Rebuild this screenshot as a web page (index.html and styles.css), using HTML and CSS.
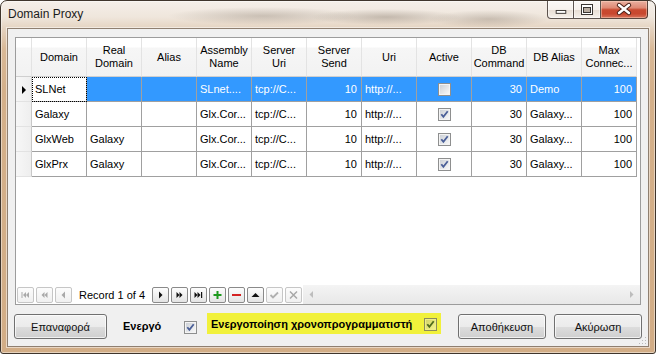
FILE: index.html
```html
<!DOCTYPE html>
<html>
<head>
<meta charset="utf-8">
<title>Domain Proxy</title>
<link rel="stylesheet" href="styles.css">
</head>
<body>
<svg class="defs" width="0" height="0" aria-hidden="true">
  <defs>
    <linearGradient id="cbg" x1="0" y1="0" x2="1" y2="1">
      <stop offset="0" stop-color="#cdd1d7"/>
      <stop offset="1" stop-color="#f7f7f7"/>
    </linearGradient>
    <linearGradient id="cbgy" x1="0" y1="0" x2="1" y2="1">
      <stop offset="0" stop-color="#d3d46a"/>
      <stop offset="1" stop-color="#f3f38a"/>
    </linearGradient>
    <symbol id="cbon" viewBox="0 0 13 13">
      <rect x=".5" y=".5" width="12" height="12" fill="#f4f4f4" stroke="#8e8f8f"/>
      <rect x="2" y="2" width="9" height="9" fill="url(#cbg)"/>
      <path d="M3.3 6.2 L5.4 8.9 L9.7 3.3" stroke="#4a5f98" stroke-width="1.8" fill="none"/>
    </symbol>
    <symbol id="cboff" viewBox="0 0 13 13">
      <rect x=".5" y=".5" width="12" height="12" fill="#f4f4f4" stroke="#8e8f8f"/>
      <rect x="2" y="2" width="9" height="9" fill="url(#cbg)"/>
    </symbol>
    <symbol id="cbyel" viewBox="0 0 13 13">
      <rect x=".5" y=".5" width="12" height="12" fill="#eeee88" stroke="#8c8c5c"/>
      <rect x="2" y="2" width="9" height="9" fill="url(#cbgy)"/>
      <path d="M3.3 6.2 L5.4 8.9 L9.7 3.3" stroke="#4f6b1c" stroke-width="1.8" fill="none"/>
    </symbol>
  </defs>
</svg>

<div class="window">
  <div class="titlebar">
    <span class="title">Domain Proxy</span>
    <div class="caption">
      <div class="cbtn cmin">
        <svg viewBox="0 0 26 17" width="26" height="17"><rect x="8.5" y="9.5" width="10" height="3" fill="#fff" stroke="#3a3633"/></svg>
      </div>
      <div class="cbtn cmax">
        <svg viewBox="0 0 26 17" width="26" height="17"><rect x="7.5" y="3.5" width="11" height="10" fill="none" stroke="#3a3633"/><rect x="8.5" y="4.5" width="9" height="8" fill="none" stroke="#fff"/><rect x="9" y="5" width="8" height="1.5" fill="#fff"/><rect x="9.5" y="6.5" width="7" height="5" fill="#b8aca0" stroke="#3a3633"/></svg>
      </div>
      <div class="cbtn cclose">
        <svg viewBox="0 0 46 17" width="46" height="17"><path d="M18 4 L28 12 M28 4 L18 12" stroke="#4a2118" stroke-width="4.4" stroke-linecap="round" fill="none"/><path d="M18 4 L28 12 M28 4 L18 12" stroke="#fff" stroke-width="2.4" stroke-linecap="round" fill="none"/></svg>
      </div>
    </div>
  </div>

  <div class="client">
    <div class="grid">
      <div class="table">
        <div class="hc corner"></div>
        <div class="hc">Domain</div>
        <div class="hc">Real<br>Domain</div>
        <div class="hc">Alias</div>
        <div class="hc">Assembly<br>Name</div>
        <div class="hc">Server<br>Uri</div>
        <div class="hc">Server<br>Send</div>
        <div class="hc">Uri</div>
        <div class="hc">Active</div>
        <div class="hc">DB<br>Command</div>
        <div class="hc">DB Alias</div>
        <div class="hc">Max<br>Connec...</div>

        <div class="rh"><svg viewBox="0 0 15 24" width="15" height="24"><polygon points="6,9 6,17 10,13" fill="#000"/></svg></div>
        <div class="c focus">SLNet</div>
        <div class="c sel"></div>
        <div class="c sel"></div>
        <div class="c sel">SLnet....</div>
        <div class="c sel">tcp://C...</div>
        <div class="c sel r">10</div>
        <div class="c sel">http://...</div>
        <div class="c sel ck"><svg class="cb"><use href="#cboff"/></svg></div>
        <div class="c sel r">30</div>
        <div class="c sel">Demo</div>
        <div class="c sel r">100</div>

        <div class="rh"></div>
        <div class="c">Galaxy</div>
        <div class="c"></div>
        <div class="c"></div>
        <div class="c">Glx.Cor...</div>
        <div class="c">tcp://C...</div>
        <div class="c r">10</div>
        <div class="c">http://...</div>
        <div class="c ck"><svg class="cb"><use href="#cbon"/></svg></div>
        <div class="c r">30</div>
        <div class="c">Galaxy...</div>
        <div class="c r">100</div>

        <div class="rh"></div>
        <div class="c">GlxWeb</div>
        <div class="c">Galaxy</div>
        <div class="c"></div>
        <div class="c">Glx.Cor...</div>
        <div class="c">tcp://C...</div>
        <div class="c r">10</div>
        <div class="c">http://...</div>
        <div class="c ck"><svg class="cb"><use href="#cbon"/></svg></div>
        <div class="c r">30</div>
        <div class="c">Galaxy...</div>
        <div class="c r">100</div>

        <div class="rh"></div>
        <div class="c">GlxPrx</div>
        <div class="c">Galaxy</div>
        <div class="c"></div>
        <div class="c">Glx.Cor...</div>
        <div class="c">tcp://C...</div>
        <div class="c r">10</div>
        <div class="c">http://...</div>
        <div class="c ck"><svg class="cb"><use href="#cbon"/></svg></div>
        <div class="c r">30</div>
        <div class="c">Galaxy...</div>
        <div class="c r">100</div>
      </div>

      <div class="filler"></div>

      <div class="nav">
        <div class="nb dis first"><svg viewBox="0 0 15 14"><rect x="3.5" y="4" width="1" height="6"/><polygon points="8,4 8,10 5,7"/><polygon points="11,4 11,10 8,7"/></svg></div>
        <div class="nb dis"><svg viewBox="0 0 15 14"><polygon points="7.5,4 7.5,10 4.5,7"/><polygon points="10.5,4 10.5,10 7.5,7"/></svg></div>
        <div class="nb dis"><svg viewBox="0 0 15 14"><polygon points="9,3.5 9,10.5 5.5,7"/></svg></div>
        <div class="rec">Record 1 of 4</div>
        <div class="nb"><svg viewBox="0 0 15 14"><polygon points="6,3.5 6,10.5 9.5,7"/></svg></div>
        <div class="nb"><svg viewBox="0 0 15 14"><polygon points="4.5,4 4.5,10 7.5,7"/><polygon points="7.5,4 7.5,10 10.5,7"/></svg></div>
        <div class="nb"><svg viewBox="0 0 15 14"><polygon points="3.5,4 3.5,10 6.5,7"/><polygon points="6.5,4 6.5,10 9.5,7"/><rect x="10" y="4" width="1.2" height="6"/></svg></div>
        <div class="nb"><svg viewBox="0 0 15 14"><rect x="3.5" y="6" width="8" height="2" fill="#1e9a1e"/><rect x="6.5" y="3" width="2" height="8" fill="#1e9a1e"/></svg></div>
        <div class="nb"><svg viewBox="0 0 15 14"><rect x="3" y="6" width="9" height="2" fill="#d42222"/></svg></div>
        <div class="nb"><svg viewBox="0 0 15 14"><polygon points="3.5,9 11.5,9 7.5,5"/></svg></div>
        <div class="nb dis"><svg viewBox="0 0 15 14"><path d="M3.5 7 L6 9.5 L11 4.5" stroke="#b0b0b0" stroke-width="1.8" fill="none"/></svg></div>
        <div class="nb dis"><svg viewBox="0 0 15 14"><path d="M4 3.5 L11 10.5 M11 3.5 L4 10.5" stroke="#a8a8a8" stroke-width="1.5" fill="none"/></svg></div>
        <div class="hscroll">
          <svg viewBox="0 0 4 7" width="4" height="7"><polygon points="4,0 4,7 0.5,3.5" fill="#bdbdbd"/></svg>
          <svg viewBox="0 0 4 7" width="4" height="7"><polygon points="0,0 0,7 3.5,3.5" fill="#bdbdbd"/></svg>
        </div>
      </div>
    </div>

    <div class="bottom">
      <div class="btn b-reset">Επαναφορά</div>
      <div class="lbl">Ενεργό</div>
      <svg class="cb cb-act"><use href="#cbon"/></svg>
      <div class="hl">
        <span>Ενεργοποίηση χρονοπρογραμματιστή</span>
        <svg class="cb cb-hl"><use href="#cbyel"/></svg>
      </div>
      <div class="btn b-save">Αποθήκευση</div>
      <div class="btn b-cancel">Ακύρωση</div>
    </div>

    <svg class="grip" viewBox="0 0 8 8" width="8" height="8">
      <rect x="6" y="0" width="1" height="1" fill="#b9b9b9"/>
      <rect x="3" y="3" width="1" height="1" fill="#b9b9b9"/><rect x="6" y="3" width="1" height="1" fill="#b9b9b9"/>
      <rect x="0" y="6" width="1" height="1" fill="#b9b9b9"/><rect x="3" y="6" width="1" height="1" fill="#b9b9b9"/><rect x="6" y="6" width="1" height="1" fill="#b9b9b9"/>
    </svg>
  </div>
</div>
</body>
</html>
```

FILE: styles.css
```css
* { box-sizing: border-box; margin: 0; padding: 0; }
html, body { width: 656px; height: 354px; overflow: hidden; background: #ffffff; }
body { font-family: "Liberation Sans", Arial, sans-serif; font-size: 11px; color: #000; }

.defs { position: absolute; width: 0; height: 0; overflow: hidden; }

.window {
  width: 656px;
  height: 354px;
  display: flex;
  flex-direction: column;
  padding: 0 6px 6px 6px;
  border: 1px solid #3f352c;
  border-radius: 7px 7px 3px 3px;
  background:
    radial-gradient(95px 9px at 262px 15px, rgba(95, 80, 65, .26), rgba(95, 80, 65, 0)),
    radial-gradient(75px 8px at 385px 16px, rgba(95, 80, 65, .30), rgba(95, 80, 65, 0)),
    radial-gradient(60px 9px at 488px 18px, rgba(95, 80, 65, .26), rgba(95, 80, 65, 0)),
    linear-gradient(#f5efe9 0, #efe6dc 16px, #e4d2bf 28px, #d9b997 48px, #d4b08a 90px, #d2ad86 100%);
  box-shadow: inset 0 0 0 1px rgba(255, 255, 255, .45);
}

.titlebar {
  height: 27px;
  display: flex;
  justify-content: space-between;
  align-items: flex-start;
  flex-shrink: 0;
}
.title {
  font-size: 12px;
  line-height: 14px;
  color: #1b1b1b;
  padding: 6px 0 0 1px;
}
.caption { display: flex; margin-right: 1px; }
.cbtn {
  height: 18px;
  border: 1px solid rgba(55, 45, 40, .8);
  border-top: none;
  display: flex;
  align-items: flex-start;
}
.cbtn svg { display: block; }
.cmin {
  width: 27px;
  border-radius: 0 0 0 4px;
  background: linear-gradient(rgba(255,255,255,.55) 0%, rgba(255,255,255,.35) 50%, rgba(200,185,170,.25) 51%, rgba(255,255,255,.45) 100%);
  box-shadow: inset 0 0 0 1px rgba(255,255,255,.45);
}
.cmax {
  width: 27px;
  border-left: none;
  background: linear-gradient(rgba(255,255,255,.55) 0%, rgba(255,255,255,.35) 50%, rgba(200,185,170,.25) 51%, rgba(255,255,255,.45) 100%);
  box-shadow: inset 0 0 0 1px rgba(255,255,255,.45);
}
.cclose {
  width: 47px;
  border-left: none;
  border-radius: 0 0 4px 0;
  background: linear-gradient(#eab0a0 0%, #df8a75 40%, #c94a30 52%, #c8472e 75%, #d7745c 100%);
  box-shadow: inset 0 0 0 1px rgba(255, 220, 200, .45);
}

.client {
  position: relative;
  flex: 1;
  display: flex;
  flex-direction: column;
  padding: 8px 7px 7px 7px;
  background: #f0f0f0;
  border: 1px solid #8f7f70;
  box-shadow: 0 0 0 1px rgba(255, 255, 255, .5);
}

.grid {
  height: 268px;
  flex-shrink: 0;
  border: 1px solid #9c9c9c;
  background: #fff;
  display: flex;
  flex-direction: column;
}
.table {
  display: grid;
  grid-template-columns: 16px repeat(11, 55px);
}
.hc {
  height: 39px;
  display: flex;
  align-items: center;
  justify-content: center;
  text-align: center;
  line-height: 13px;
  background: linear-gradient(#ffffff 0, #ffffff 9px, #f6f6f6 10px, #f2f2f2 100%);
  border-right: 1px solid #e3e3e3;
  border-bottom: 1px solid #cfcfcf;
  white-space: nowrap;
  overflow: hidden;
}
.corner { border-right-color: #e3e3e3; }
.rh {
  height: 25px;
  background: linear-gradient(90deg, #f7f7f7, #eeeeee);
  border-right: 1px solid #c8c8c8;
  border-bottom: 1px solid #e2e2e2;
}
.rh svg { display: block; }
.c {
  height: 25px;
  line-height: 24px;
  padding: 0 3px;
  border-right: 1px solid #a0a0a0;
  border-bottom: 1px solid #a0a0a0;
  white-space: nowrap;
  overflow: hidden;
}
.r { text-align: right; padding-right: 4px; }
.sel { background: #3399ff; color: #fff; }
.focus {
  background: #fff;
  color: #000;
  outline: 1px dotted #000;
  outline-offset: -1px;
}
.ck { display: flex; align-items: center; justify-content: center; }
.cb { display: block; width: 13px; height: 13px; flex-shrink: 0; }

.filler { flex: 1; }

.nav {
  height: 19px;
  display: flex;
  align-items: center;
  flex-shrink: 0;
}
.nb {
  width: 17px;
  height: 16px;
  margin-left: 2px;
  flex-shrink: 0;
  border: 1px solid #8a8a8a;
  border-radius: 2px;
  background: linear-gradient(#fdfdfd, #e4e4e4);
}
.nb.first { margin-left: 1px; }
.nb svg { display: block; width: 15px; height: 14px; fill: #111; }
.nb.dis { border-color: #c6c6c6; background: linear-gradient(#fcfcfc, #f0f0f0); }
.nb.dis svg { fill: #a9a9a9; }
.rec {
  width: 76px;
  margin-left: 2px;
  padding-left: 5px;
  line-height: 16px;
  white-space: nowrap;
  flex-shrink: 0;
}
.hscroll {
  flex: 1;
  height: 19px;
  margin-left: 1px;
  display: flex;
  align-items: center;
  justify-content: space-between;
  padding: 0 6px;
  background: linear-gradient(#f4f4f4, #e8e8e8);
}
.hscroll svg { display: block; }

.bottom {
  margin-top: 8px;
  height: 26px;
  display: flex;
  align-items: flex-start;
  flex-shrink: 0;
}
.btn {
  height: 25px;
  margin-top: 1px;
  flex-shrink: 0;
  border: 1px solid #707070;
  border-radius: 3px;
  background: linear-gradient(#f2f2f2 0%, #ebebeb 50%, #dddddd 51%, #cfcfcf 100%);
  box-shadow: inset 0 0 0 1px rgba(255, 255, 255, .7);
  display: flex;
  align-items: center;
  justify-content: center;
  color: #111;
}
.b-reset { width: 93px; margin-left: -1px; }
.b-save { width: 88px; margin-left: 17px; }
.b-cancel { width: 88px; margin-left: 8px; }
.lbl {
  width: 61px;
  margin-left: 16px;
  font-weight: bold;
  line-height: 26px;
  flex-shrink: 0;
}
.cb-act { margin-top: 8px; }
.hl {
  width: 234px;
  height: 21px;
  margin-left: 10px;
  flex-shrink: 0;
  display: flex;
  align-items: center;
  padding: 1px 4px 0 4px;
  background: #f1f13b;
  font-weight: bold;
  white-space: nowrap;
}
.cb-hl { margin-left: auto; }

.grip { position: absolute; right: 1px; bottom: 1px; display: block; }
```
